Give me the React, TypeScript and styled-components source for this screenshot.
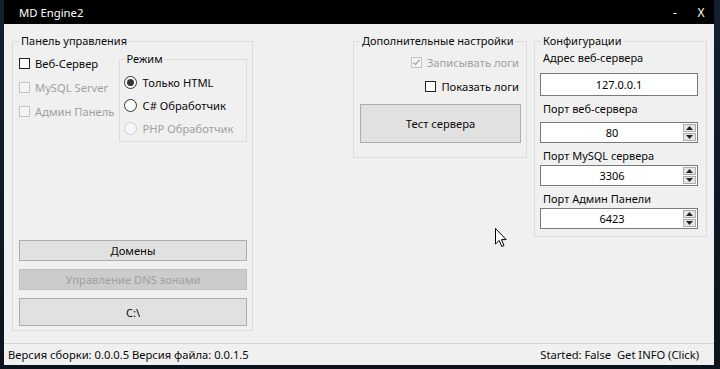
import React from "react";
import styled, { createGlobalStyle } from "styled-components";

const Global = createGlobalStyle`
  html, body { margin: 0; padding: 0; }
  body {
    background: #0d1620;
    font-family: "Noto Sans", "Liberation Sans", sans-serif;
    font-size: 11px;
    color: #000;
  }
  * { box-sizing: border-box; }
`;

const Desktop = styled.div`
  width: 720px;
  height: 369px;
  padding: 0 6px 4px 4px;
  background: linear-gradient(180deg, #122030 0%, #0b131c 100%);
`;

const Window = styled.div`
  position: relative;
  height: 365px;
  display: flex;
  flex-direction: column;
`;

const TitleBar = styled.div`
  height: 24px;
  background: #000;
  color: #fff;
  display: flex;
  align-items: center;
  padding: 0 0 0 15px;
  font-size: 11.3px;
`;

const TitleText = styled.span`
  flex: 1;
`;

const TitleButton = styled.span<{ $w: number }>`
  width: ${(p) => p.$w}px;
  text-align: center;
  font-size: 12px;
`;

const Body = styled.div`
  flex: 1;
  background: #f0f0f0;
  display: flex;
  flex-direction: column;
`;

const Content = styled.div`
  flex: 1;
  display: flex;
  align-items: flex-start;
  padding: 9px 0 0 8px;
`;

const Group = styled.fieldset<{ $w: number; $h: number; $ml?: number }>`
  width: ${(p) => p.$w}px;
  height: ${(p) => p.$h}px;
  margin: 0 0 0 ${(p) => p.$ml ?? 0}px;
  padding: 0;
  border: 1px solid #dcdcdc;
  min-width: 0;
`;

const Legend = styled.legend<{ $ml?: number }>`
  margin-left: ${(p) => p.$ml ?? 6}px;
  padding: 0 2px;
  line-height: 16px;
  font-size: 11px;
  color: #0a0a0a;
  white-space: nowrap;
`;

const LeftInner = styled.div`
  height: 100%;
  display: flex;
  flex-direction: column;
  padding: 2px 5px 4px 6px;
`;

const TopRow = styled.div`
  display: flex;
  align-items: flex-start;
`;

const CheckColumn = styled.div`
  width: 100px;
  display: flex;
  flex-direction: column;
`;

const Row = styled.div<{ $h?: number; $end?: boolean; $pr?: number }>`
  height: ${(p) => p.$h ?? 24}px;
  display: flex;
  align-items: center;
  justify-content: ${(p) => (p.$end ? "flex-end" : "flex-start")};
  padding-right: ${(p) => p.$pr ?? 0}px;
`;

const Box = styled.span<{ $disabled?: boolean }>`
  width: 11px;
  height: 11px;
  border: 1px solid ${(p) => (p.$disabled ? "#c4c4c4" : "#222")};
  background: ${(p) => (p.$disabled ? "#f4f4f4" : "#fff")};
  display: inline-flex;
  align-items: center;
  justify-content: center;
  margin-right: 5px;
  flex: none;
`;

const Label = styled.span<{ $disabled?: boolean }>`
  color: ${(p) => (p.$disabled ? "#a0a0a0" : "#0a0a0a")};
  white-space: nowrap;
  font-size: 11.2px;
`;

const Radio = styled.span<{ $disabled?: boolean; $checked?: boolean }>`
  width: 13px;
  height: 13px;
  border-radius: 50%;
  border: 1px solid ${(p) => (p.$disabled ? "#cfcfcf" : "#333")};
  background: ${(p) => (p.$disabled ? "#f6f6f6" : "#fff")};
  margin-right: 6px;
  display: inline-flex;
  align-items: center;
  justify-content: center;
  flex: none;
  &::after {
    content: "";
    width: 7px;
    height: 7px;
    border-radius: 50%;
    background: ${(p) => (p.$checked ? "#333" : "transparent")};
  }
`;

const ModeInner = styled.div`
  display: flex;
  flex-direction: column;
  padding: 4px 0 0 4px;
`;

const Spacer = styled.div`
  flex: 1;
`;

const Button = styled.div<{ $h: number; $disabled?: boolean; $mt?: number }>`
  height: ${(p) => p.$h}px;
  margin-top: ${(p) => p.$mt ?? 0}px;
  border: 1px solid ${(p) => (p.$disabled ? "#bfbfbf" : "#adadad")};
  background: ${(p) => (p.$disabled ? "#cccccc" : "#e1e1e1")};
  color: ${(p) => (p.$disabled ? "#a0a0a0" : "#0a0a0a")};
  display: flex;
  align-items: center;
  justify-content: center;
  font-size: 11.2px;
`;

const MidInner = styled.div`
  display: flex;
  flex-direction: column;
  padding: 1px 5px 0 6px;
`;

const ConfInner = styled.div`
  display: flex;
  flex-direction: column;
  padding: 1px 8px 0 5px;
`;

const FieldLabel = styled.div<{ $mt?: number }>`
  line-height: 16px;
  margin-top: ${(p) => p.$mt ?? 0}px;
  padding-left: 3px;
  color: #0a0a0a;
`;

const TextBox = styled.div<{ $h: number; $mt: number }>`
  height: ${(p) => p.$h}px;
  margin-top: ${(p) => p.$mt}px;
  width: 158px;
  border: 1px solid #7a7a7a;
  background: #fff;
  display: flex;
  align-items: center;
`;

const BoxValue = styled.span`
  flex: 1;
  text-align: center;
`;

const SpinCol = styled.div`
  width: 14px;
  height: 100%;
  display: flex;
  flex-direction: column;
  gap: 1px;
  padding: 1px 1px 1px 0;
`;

const SpinBtn = styled.div`
  flex: 1;
  border: 1px solid #acacac;
  background: #e5e5e5;
  display: flex;
  align-items: center;
  justify-content: center;
`;

const StatusBar = styled.div`
  height: 22px;
  border-top: 1px solid #d5d5d5;
  display: flex;
  align-items: center;
  justify-content: space-between;
  padding: 0 15px 0 4px;
  font-size: 11.2px;
  color: #0a0a0a;
`;

const Cursor = styled.svg`
  position: absolute;
  left: 491px;
  top: 228px;
`;

const Check = ({ disabled, checked }: { disabled?: boolean; checked?: boolean }) => (
  <Box $disabled={disabled}>
    {checked && (
      <svg width="9" height="9" viewBox="0 0 9 9">
        <path d="M1.5 4.5 L3.5 6.5 L7.5 2" stroke={disabled ? "#a8a8a8" : "#222"} strokeWidth="1.4" fill="none" />
      </svg>
    )}
  </Box>
);

const Arrow = ({ up }: { up?: boolean }) => (
  <svg width="7" height="4" viewBox="0 0 7 4">
    <path d={up ? "M0 4 L3.5 0 L7 4 Z" : "M0 0 L3.5 4 L7 0 Z"} fill="#222" />
  </svg>
);

const Spinner = ({ value, mt }: { value: string; mt: number }) => (
  <TextBox $h={21} $mt={mt}>
    <BoxValue>{value}</BoxValue>
    <SpinCol>
      <SpinBtn>
        <Arrow up />
      </SpinBtn>
      <SpinBtn>
        <Arrow />
      </SpinBtn>
    </SpinCol>
  </TextBox>
);

export default function App() {
  return (
    <>
      <Global />
      <Desktop>
        <Window>
          <TitleBar>
            <TitleText>MD Engine2</TitleText>
            <TitleButton $w={26}>-</TitleButton>
            <TitleButton $w={26}>X</TitleButton>
          </TitleBar>
          <Body>
            <Content>
              <Group $w={241} $h={298}>
                <Legend>Панель управления</Legend>
                <LeftInner>
                  <TopRow>
                    <CheckColumn>
                      <Row>
                        <Check />
                        <Label>Веб-Сервер</Label>
                      </Row>
                      <Row>
                        <Check disabled />
                        <Label $disabled>MySQL Server</Label>
                      </Row>
                      <Row>
                        <Check disabled />
                        <Label $disabled>Админ Панель</Label>
                      </Row>
                    </CheckColumn>
                    <Group $w={129} $h={91}>
                      <Legend $ml={5}>Режим</Legend>
                      <ModeInner>
                        <Row $h={23}>
                          <Radio $checked />
                          <Label>Только HTML</Label>
                        </Row>
                        <Row $h={23}>
                          <Radio />
                          <Label>C# Обработчик</Label>
                        </Row>
                        <Row $h={23}>
                          <Radio $disabled />
                          <Label $disabled>PHP Обработчик</Label>
                        </Row>
                      </ModeInner>
                    </Group>
                  </TopRow>
                  <Spacer />
                  <Button $h={21}>Домены</Button>
                  <Button $h={21} $mt={8} $disabled>
                    Управление DNS зонами
                  </Button>
                  <Button $h={28} $mt={8}>
                    C:\
                  </Button>
                </LeftInner>
              </Group>

              <Group $w={174} $h={125} $ml={100}>
                <Legend $ml={6}>Дополнительные настройки</Legend>
                <MidInner>
                  <Row $end $pr={2}>
                    <Check disabled checked />
                    <Label $disabled>Записывать логи</Label>
                  </Row>
                  <Row $end $pr={2}>
                    <Check />
                    <Label>Показать логи</Label>
                  </Row>
                  <Button $h={39} $mt={6}>
                    Тест сервера
                  </Button>
                </MidInner>
              </Group>

              <Group $w={173} $h={204} $ml={7}>
                <Legend $ml={6}>Конфигурации</Legend>
                <ConfInner>
                  <FieldLabel>Адрес веб-сервера</FieldLabel>
                  <TextBox $h={23} $mt={7}>
                    <BoxValue>127.0.0.1</BoxValue>
                  </TextBox>
                  <FieldLabel $mt={5}>Порт веб-сервера</FieldLabel>
                  <Spinner value="80" mt={5} />
                  <FieldLabel $mt={5}>Порт MySQL сервера</FieldLabel>
                  <Spinner value="3306" mt={1} />
                  <FieldLabel $mt={5}>Порт Админ Панели</FieldLabel>
                  <Spinner value="6423" mt={1} />
                </ConfInner>
              </Group>
            </Content>
            <StatusBar>
              <span>Версия сборки: 0.0.0.5 Версия файла: 0.0.1.5</span>
              <span>Started: False&nbsp; Get INFO (Click)</span>
            </StatusBar>
          </Body>
          <Cursor width="12" height="20" viewBox="0 0 12 20">
            <path d="M0.5 0.5 L0.5 16 L4.2 12.4 L6.8 18.5 L9 17.6 L6.5 11.6 L11.2 11.6 Z" fill="#fff" stroke="#000" strokeWidth="1" />
          </Cursor>
        </Window>
      </Desktop>
    </>
  );
}
